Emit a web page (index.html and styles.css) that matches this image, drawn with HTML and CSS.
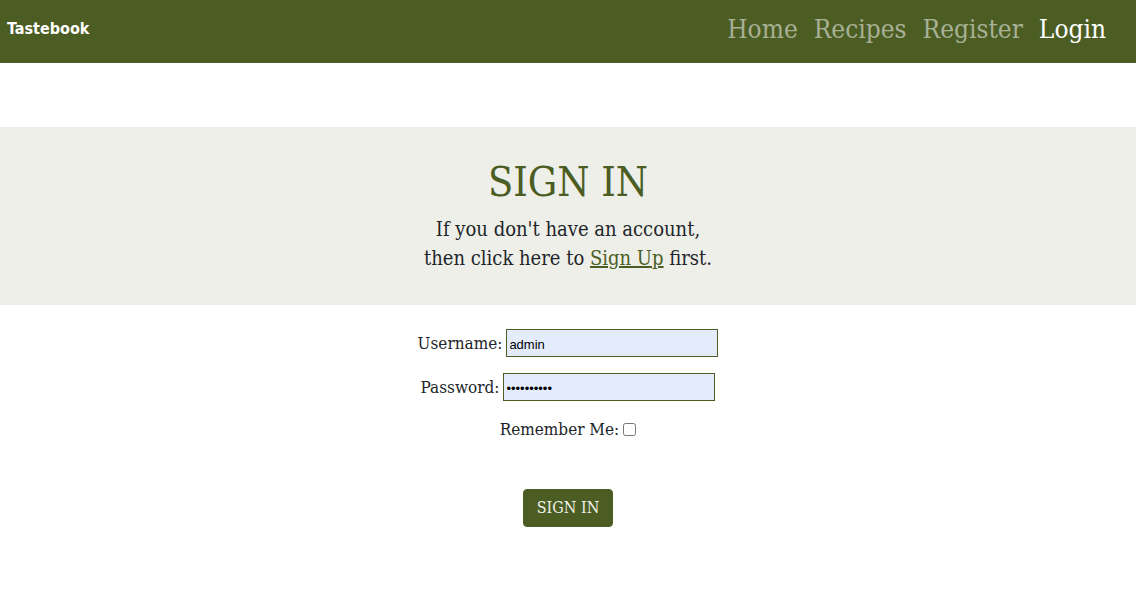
FILE: index.html
```html
<!DOCTYPE html>
<html lang="en">
<head>
<meta charset="utf-8">
<meta name="viewport" content="width=device-width, initial-scale=1">
<title>Tastebook</title>
<link rel="stylesheet" href="styles.css">
</head>
<body>
<header class="navbar">
  <a class="brand" href="#">Tastebook</a>
  <nav class="nav">
    <a class="nav-link" href="#">Home</a>
    <a class="nav-link" href="#">Recipes</a>
    <a class="nav-link" href="#">Register</a>
    <a class="nav-link active" href="#" aria-current="page">Login</a>
  </nav>
</header>
<main>
  <section class="hero">
    <h1 class="title">SIGN IN</h1>
    <p class="lead">If you don't have an account,<br>then click here to <a class="signup" href="#">Sign Up</a> first.</p>
  </section>
  <form class="form">
    <div class="field">
      <label for="username">Username:</label>
      <input class="text" id="username" type="text" value="admin">
    </div>
    <div class="field">
      <label for="password">Password:</label>
      <input class="text" id="password" type="password" value="tastebook1">
    </div>
    <div class="field">
      <label for="remember">Remember Me:</label>
      <input class="check" id="remember" type="checkbox">
    </div>
    <button class="submit" type="button">SIGN IN</button>
  </form>
</main>
</body>
</html>
```
FILE: styles.css
```css
* {
  box-sizing: border-box;
}

body {
  margin: 0;
  background: #fff;
  color: #212529;
  font: 17px/24px "DejaVu Serif Condensed", "Liberation Serif", serif;
}

.navbar {
  display: flex;
  align-items: center;
  justify-content: space-between;
  padding: 9px 30px 14px 7px;
  background: #4b5d23;
}

.brand {
  color: #fff;
  font: bold 16px/40px "DejaVu Sans Condensed", sans-serif;
  text-decoration: none;
}

.nav {
  display: flex;
  gap: 16px;
}

.nav-link {
  color: #a8b095;
  font-size: 26px;
  line-height: 40px;
  text-decoration: none;
}

.nav-link.active {
  color: #fff;
}

.hero {
  margin-top: 64px;
  padding: 30px 16px 32px;
  background: #eeefe9;
  text-align: center;
}

.title {
  margin: 0 0 8px;
  color: #4b5d23;
  font-size: 41px;
  font-weight: 400;
  line-height: 50px;
}

.lead {
  margin: 0;
  font-size: 20px;
  line-height: 29px;
}

.signup {
  color: #4b5d23;
}

.form {
  display: flex;
  flex-direction: column;
  align-items: center;
  gap: 16px;
  padding: 24px 16px;
}

.field {
  display: flex;
  align-items: center;
  gap: 4px;
}

.text {
  width: 212px;
  height: 28px;
  padding: 2px 2px 0;
  border: 1px solid #4b5d23;
  border-radius: 0;
  background: #e4ecfc;
  color: #000;
  font: 13px "Liberation Sans", Arial, sans-serif;
}

.check {
  width: 13px;
  height: 13px;
  margin: 0;
}

.submit {
  margin-top: 32px;
  padding: 6px 13px;
  border: 1px solid #4b5d23;
  border-radius: 4px;
  background: #4b5d23;
  color: #eeefe9;
  font: inherit;
  font-size: 16px;
}
```
